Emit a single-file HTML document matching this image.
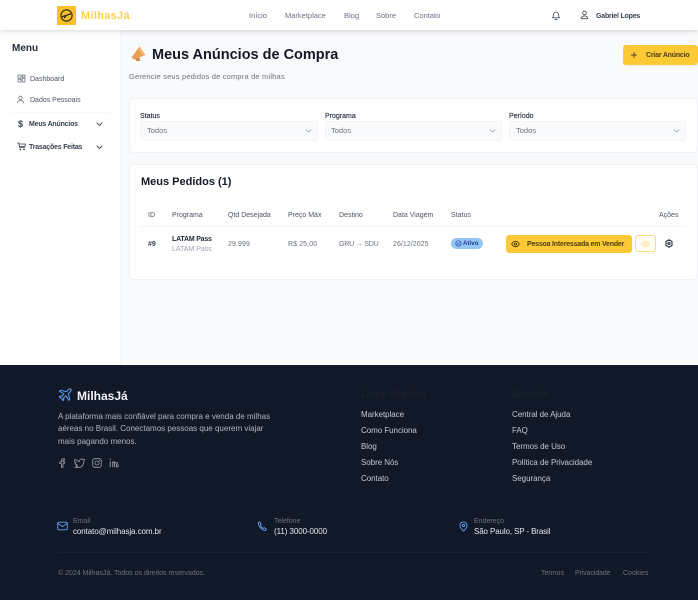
<!DOCTYPE html>
<html lang="pt-BR">
<head>
<meta charset="utf-8">
<title>Meus Anúncios de Compra</title>
<style>
html,body{margin:0;padding:0;width:698px;height:600px;overflow:hidden;background:#f9fafb}
body{font-family:"Liberation Sans",sans-serif;position:relative;filter:blur(.3px)}
.t{position:absolute;white-space:nowrap;line-height:12px;height:12px;font-size:7.5px;letter-spacing:0;color:#4b5563}
.s{font-size:7px;margin-top:1px}
.k{font-size:7px;font-weight:700;letter-spacing:-.2px;margin-top:1px}
.b{font-weight:700}
.box{position:absolute;box-sizing:border-box}
svg{position:absolute;fill:none;stroke-linecap:round;stroke-linejoin:round}
.card{background:#fff;border:1px solid #f0f1f4;border-radius:4px}
.sel{background:#f9fafb;border:1px solid #f3f4f6;border-radius:3px;top:121px;height:20px}
.f{color:#c4c9d1;font-size:8px;letter-spacing:-.05px}
.d{color:#b0b6c0;font-size:8px;letter-spacing:0}
.m{color:#6b7280;font-size:7px;letter-spacing:0;margin-top:1px}
.l{color:#374151;font-size:7px;-webkit-text-stroke:.2px #374151;margin-top:1px}
</style>
</head>
<body>
<!-- sidebar -->
<div class="box" style="left:0;top:0;width:121px;height:365px;background:#fff;border-right:1px solid #f3f4f6"></div>
<!-- header -->
<div class="box" style="left:0;top:0;width:698px;height:30px;background:#fff;box-shadow:0 1px 5px rgba(0,0,0,.16)"></div>
<div class="box" style="left:57px;top:6px;width:19px;height:19px;background:#fbc02d"></div>
<svg style="left:59px;top:8px" width="15" height="15" viewBox="0 0 15 15" stroke="#3a3210"><circle cx="7.5" cy="7.5" r="5.6" stroke-width="1.2"/><path d="M3.6 8.6 L11.4 6 M7 7.6 L5.6 9.6" stroke-width="1.4"/></svg>
<div class="t b" style="left:81px;top:10px;font-size:11px;letter-spacing:.3px;color:#ffd24d;line-height:13px;height:13px">MilhasJá</div>
<div class="t" style="left:249px;top:10px;color:#6b7280">Início</div>
<div class="t" style="left:285px;top:10px;color:#6b7280">Marketplace</div>
<div class="t" style="left:344px;top:10px;color:#6b7280">Blog</div>
<div class="t" style="left:376px;top:10px;color:#6b7280">Sobre</div>
<div class="t" style="left:414px;top:10px;color:#6b7280">Contato</div>
<svg style="left:551px;top:10px" width="10" height="11" viewBox="0 0 10 11" stroke="#4b5563" stroke-width=".9"><path d="M1.500 7.800h7c-.8-.8-1-1.500-1-3.200a2.500 2.500 0 0 0-5 0c0 1.700-.2 2.400-1 3.200zM4 9.500h2"/></svg>
<svg style="left:580px;top:10px" width="9" height="10" viewBox="0 0 9 10" stroke="#4b5563" stroke-width=".9"><circle cx="4.500" cy="3" r="1.800"/><path d="M1.200 8.700c.3-2 1.700-2.800 3.300-2.800s3 .8 3.300 2.800z"/></svg>
<div class="t k" style="left:596px;top:10px;color:#374151">Gabriel Lopes</div>

<!-- sidebar content -->
<div class="t b" style="left:12px;top:43px;font-size:10px;color:#1f2937">Menu</div>
<svg style="left:17px;top:74px" width="9" height="9" viewBox="0 0 9 9" stroke="#6b7280" stroke-width=".8"><rect x="1" y="1" width="3" height="3"/><rect x="5.200" y="1" width="2.800" height="2"/><rect x="1" y="5.200" width="3" height="2.800"/><rect x="5.200" y="4.200" width="2.800" height="3.800"/></svg>
<div class="t s" style="left:30px;top:73px">Dashboard</div>
<svg style="left:16px;top:95px" width="9" height="9" viewBox="0 0 9 9" stroke="#6b7280" stroke-width=".8"><circle cx="4.500" cy="2.800" r="1.700"/><path d="M1.500 8c.2-1.800 1.500-2.500 3-2.500s2.800.7 3 2.500"/></svg>
<div class="t s" style="left:30px;top:94px">Dados Pessoais</div>
<div class="box" style="left:12px;top:112px;width:97px;height:1px;background:#f6f7f8"></div>
<div class="t" style="left:18px;top:118px;font-size:9px;font-weight:700;color:#374151">$</div>
<div class="t k" style="left:29px;top:118px;color:#374151">Meus Anúncios</div>
<svg style="left:96px;top:122px" width="7" height="5" viewBox="0 0 7 5" stroke="#4b5563"><path d="M1 1l2.500 2.500L6 1"/></svg>
<svg style="left:17px;top:142px" width="9" height="9" viewBox="0 0 9 9" stroke="#374151" stroke-width=".8"><path d="M.5 1h1.300l.8 4.500h5M2 2h6.500l-.7 2.500H2.400"/><circle cx="3.200" cy="7.500" r=".5"/><circle cx="7" cy="7.500" r=".5"/></svg>
<div class="t k" style="left:29px;top:141px;color:#374151">Trasações Feitas</div>
<svg style="left:96px;top:145px" width="7" height="5" viewBox="0 0 7 5" stroke="#4b5563"><path d="M1 1l2.500 2.500L6 1"/></svg>

<!-- title -->
<svg style="left:130px;top:45px" width="17" height="17" viewBox="0 0 17 17"><path d="M1.500 12.500 L9.500 1.500 L15.500 10 L4 14.500z" fill="#e8a052"/><path d="M9.500 1.500 L15.500 10 L13 11 L8 3.500z" fill="#f5b56b"/><path d="M5 14l1.500 2h3.500l-.5-3.500z" fill="#c98545"/></svg>
<div class="t b" style="left:152px;top:46px;font-size:14.500px;line-height:18px;height:18px;color:#111827">Meus Anúncios de Compra</div>
<div class="t" style="left:129px;top:71px;color:#6b7280;letter-spacing:.18px">Gerencie seus pedidos de compra de milhas</div>
<div class="box" style="left:623px;top:45px;width:75px;height:20px;background:#fdc935;border-radius:3px;box-shadow:0 1px 1px rgba(0,0,0,.06)"></div>
<svg style="left:631px;top:52px" width="6" height="6" viewBox="0 0 6 6" stroke="#4b3f12" stroke-width=".9"><path d="M3 .5v5M.5 3h5"/></svg>
<div class="t k" style="left:646px;top:49px;color:#4b3f12">Criar Anúncio</div>

<!-- filters -->
<div class="box card" style="left:129px;top:98px;width:569px;height:55px"></div>
<div class="t l" style="left:140px;top:110px">Status</div>
<div class="t l" style="left:325px;top:110px">Programa</div>
<div class="t l" style="left:509px;top:110px">Período</div>
<div class="box sel" style="left:140px;width:178px"></div>
<div class="box sel" style="left:325px;width:177px"></div>
<div class="box sel" style="left:509px;width:177px"></div>
<div class="t" style="left:147px;top:125px;color:#6b7280">Todos</div>
<div class="t" style="left:331px;top:125px;color:#6b7280">Todos</div>
<div class="t" style="left:516px;top:125px;color:#6b7280">Todos</div>
<svg style="left:305px;top:129px" width="7" height="4" viewBox="0 0 7 4" stroke="#9ca3af" stroke-width=".8"><path d="M1 .8l2.500 2.200L6 .8"/></svg>
<svg style="left:489px;top:129px" width="7" height="4" viewBox="0 0 7 4" stroke="#9ca3af" stroke-width=".8"><path d="M1 .8l2.500 2.200L6 .8"/></svg>
<svg style="left:673px;top:129px" width="7" height="4" viewBox="0 0 7 4" stroke="#9ca3af" stroke-width=".8"><path d="M1 .8l2.500 2.200L6 .8"/></svg>

<!-- table -->
<div class="box card" style="left:129px;top:164px;width:569px;height:116px"></div>
<div class="t b" style="left:141px;top:175px;font-size:11px;line-height:14px;height:14px;color:#111827">Meus Pedidos (1)</div>
<div class="t s" style="left:148px;top:209px">ID</div>
<div class="t s" style="left:172px;top:209px">Programa</div>
<div class="t s" style="left:228px;top:209px">Qtd Desejada</div>
<div class="t s" style="left:288px;top:209px">Preço Máx</div>
<div class="t s" style="left:339px;top:209px">Destino</div>
<div class="t s" style="left:393px;top:209px">Data Viagem</div>
<div class="t s" style="left:451px;top:209px">Status</div>
<div class="t s" style="left:659px;top:209px">Ações</div>
<div class="box" style="left:140px;top:226px;width:546px;height:1px;background:#f3f4f6"></div>
<div class="t b s" style="left:148px;top:238px;color:#374151">#9</div>
<div class="t k" style="left:172px;top:233px;color:#1f2937">LATAM Pass</div>
<div class="t s" style="left:172px;top:243px;color:#9ca3af">LATAM Pass</div>
<div class="t s" style="left:228px;top:238px;color:#6b7280;letter-spacing:.1px">29.999</div>
<div class="t s" style="left:288px;top:238px;color:#6b7280;letter-spacing:.1px">R$ 25,00</div>
<div class="t s" style="left:339px;top:238px;color:#6b7280;letter-spacing:-.2px">GRU → SDU</div>
<div class="t s" style="left:393px;top:238px;color:#6b7280;letter-spacing:.05px">26/12/2025</div>
<div class="box" style="left:451px;top:238px;width:32px;height:11px;background:#93c5f5;border-radius:6px"></div>
<svg style="left:455px;top:240px" width="7" height="7" viewBox="0 0 7 7" stroke="#1e40af" stroke-width=".7"><circle cx="3.500" cy="3.500" r="2.700"/><path d="M2.300 3.500l1 .9 1.400-1.600"/></svg>
<div class="t b" style="left:463px;top:238px;font-size:6px;letter-spacing:.1px;color:#1e3a8a">Ativo</div>
<div class="box" style="left:506px;top:235px;width:126px;height:18px;background:#fdc935;border-radius:3px"></div>
<svg style="left:511px;top:240px" width="9" height="8" viewBox="0 0 9 8" stroke="#4b3f12" stroke-width=".9"><path d="M.7 4C2 1.800 3 1.200 4.500 1.200S7 1.800 8.300 4C7 6.200 6 6.800 4.500 6.800S2 6.200.7 4z"/><circle cx="4.500" cy="4" r="1.100"/></svg>
<div class="t k" style="left:527px;top:238px;color:#4b3f12">Pessoa Interessada em Vender</div>
<div class="box" style="left:635px;top:235px;width:21px;height:17px;background:#fffdf5;border:1px solid #fbdc86;border-radius:3px"></div>
<svg style="left:641px;top:240px" width="9" height="8" viewBox="0 0 9 8" stroke="#fbe29c" stroke-width=".9"><path d="M.7 4C2 1.800 3 1.200 4.500 1.200S7 1.800 8.300 4C7 6.200 6 6.800 4.500 6.800S2 6.200.7 4z"/><circle cx="4.500" cy="4" r="1.100"/></svg>
<svg style="left:665px;top:239px" width="8" height="9" viewBox="0 0 8 9" stroke="#374151" stroke-width="1.200"><path d="M4 .8l3 1.700v4L4 8.200 1 6.500v-4z"/><circle cx="4" cy="4.500" r="1"/></svg>

<!-- footer -->
<div class="box" style="left:0;top:365px;width:698px;height:235px;background:#111827"></div>
<svg style="left:58px;top:388px" width="14" height="14" viewBox="0 0 14 14" stroke="#60a5fa" stroke-width="1"><path d="M12.800 1.200c-.8-.6-1.900-.2-2.500.4L8.200 3.700 2.500 2.200 1.500 3.200 6 6l-2.200 2.300-1.600-.3-.9.900 2.200 1.400 1.400 2.200.9-.9-.3-1.600L8 7.800l2.800 4.500 1-1-1.500-5.700 2.100-2.100c.6-.6.900-1.600.4-2.300z"/></svg>
<div class="t b" style="left:77px;top:389px;font-size:12px;line-height:14px;height:14px;color:#f3f4f6">MilhasJá</div>
<div class="t d" style="left:58px;top:411px">A plataforma mais confiável para compra e venda de milhas</div>
<div class="t d" style="left:58px;top:423px">aéreas no Brasil. Conectamos pessoas que querem viajar</div>
<div class="t d" style="left:58px;top:436px">mais pagando menos.</div>
<svg style="left:58px;top:458px" width="8" height="10" viewBox="0 0 8 10" stroke="#9ca3af" stroke-width=".8"><path d="M6.500 .8H5.300C4.200.8 3.500 1.500 3.500 2.600V4H1.800v1.600h1.700v3.700h1.500V5.600h1.300L6.600 4H5V2.800c0-.3.200-.5.500-.5h1z"/></svg>
<svg style="left:74px;top:458px" width="11" height="10" viewBox="0 0 11 10" stroke="#9ca3af" stroke-width=".8"><path d="M10.300 1.200c-.4.300-.9.500-1.300.5a2 2 0 0 0-3.500 1.600C3.700 3.300 2.200 2.500 1 1.200c-.6 1.200-.4 2.900 1 3.700-.4 0-.7-.1-1-.3 0 1 .8 1.900 1.900 2.200-.3.100-.7.100-1 0 .3.800 1 1.300 1.900 1.400-.9.600-2 .9-3 .8 4.500 2 9-.5 9-5.500.4-.5.600-1.300.5-2.300z"/></svg>
<svg style="left:92px;top:458px" width="10" height="10" viewBox="0 0 10 10" stroke="#9ca3af" stroke-width=".8"><rect x=".7" y=".7" width="8.600" height="8.600" rx="2.200"/><circle cx="5" cy="5" r="2"/><circle cx="7.500" cy="2.500" r=".2"/></svg>
<svg style="left:109px;top:458px" width="10" height="10" viewBox="0 0 10 10" stroke="#9ca3af" stroke-width=".9"><path d="M1.200 3.800v5M1.200 1v.8M3.700 8.800V4h1.800v4.800M5.500 5.500c.4-1 3.500-1.500 3.500 1v2.300H7.300V6.500"/></svg>

<div class="t b" style="left:361px;top:389px;font-size:9.500px;color:#1a2231;letter-spacing:.1px">Links Rápidos</div>
<div class="t b" style="left:512px;top:389px;font-size:9.500px;color:#1a2231;letter-spacing:.1px">Suporte</div>
<div class="t f" style="left:361px;top:409px">Marketplace</div>
<div class="t f" style="left:361px;top:425px">Como Funciona</div>
<div class="t f" style="left:361px;top:441px">Blog</div>
<div class="t f" style="left:361px;top:457px">Sobre Nós</div>
<div class="t f" style="left:361px;top:473px">Contato</div>
<div class="t f" style="left:512px;top:409px">Central de Ajuda</div>
<div class="t f" style="left:512px;top:425px">FAQ</div>
<div class="t f" style="left:512px;top:441px">Termos de Uso</div>
<div class="t f" style="left:512px;top:457px">Política de Privacidade</div>
<div class="t f" style="left:512px;top:473px">Segurança</div>

<svg style="left:57px;top:521px" width="11" height="10" viewBox="0 0 11 10" stroke="#60a5fa" stroke-width=".9"><rect x=".7" y="1.200" width="9.600" height="7.600" rx="1.200"/><path d="M.8 2.500l4.700 3 4.700-3"/></svg>
<div class="t m" style="left:73px;top:515px">Email</div>
<div class="t" style="left:73px;top:526px;font-size:8px;letter-spacing:-.08px;color:#e5e7eb">contato@milhasja.com.br</div>
<svg style="left:257px;top:521px" width="11" height="11" viewBox="0 0 11 11" stroke="#60a5fa" stroke-width=".9"><path d="M1.300 1.800l1.400-.9 1.500 2.300-.8 1c.4 1.300 1.500 2.600 3 3.100l1-.7 2 1.700-.9 1.200C6 9.800 1.400 6 1.300 1.800z"/></svg>
<div class="t m" style="left:274px;top:515px">Telefone</div>
<div class="t" style="left:274px;top:526px;font-size:8px;letter-spacing:-.08px;color:#e5e7eb">(11) 3000-0000</div>
<svg style="left:459px;top:521px" width="9" height="11" viewBox="0 0 9 11" stroke="#60a5fa" stroke-width=".9"><path d="M4.500 10.200C2 8 1 6.400 1 4.400a3.500 3.500 0 0 1 7 0c0 2-1 3.600-3.500 5.800z"/><circle cx="4.500" cy="4.400" r="1.200"/></svg>
<div class="t m" style="left:474px;top:515px">Endereço</div>
<div class="t" style="left:474px;top:526px;font-size:8px;letter-spacing:-.12px;color:#e5e7eb">São Paulo, SP - Brasil</div>
<div class="box" style="left:58px;top:552px;width:590px;height:1px;background:#1a2232"></div>
<div class="t m" style="left:58px;top:567px">© 2024 MilhasJá. Todos os direitos reservados.</div>
<div class="t m" style="left:541px;top:567px">Termos</div>
<div class="t m" style="left:575px;top:567px;letter-spacing:-.1px">Privacidade</div>
<div class="t m" style="left:623px;top:567px">Cookies</div>
</body>
</html>
